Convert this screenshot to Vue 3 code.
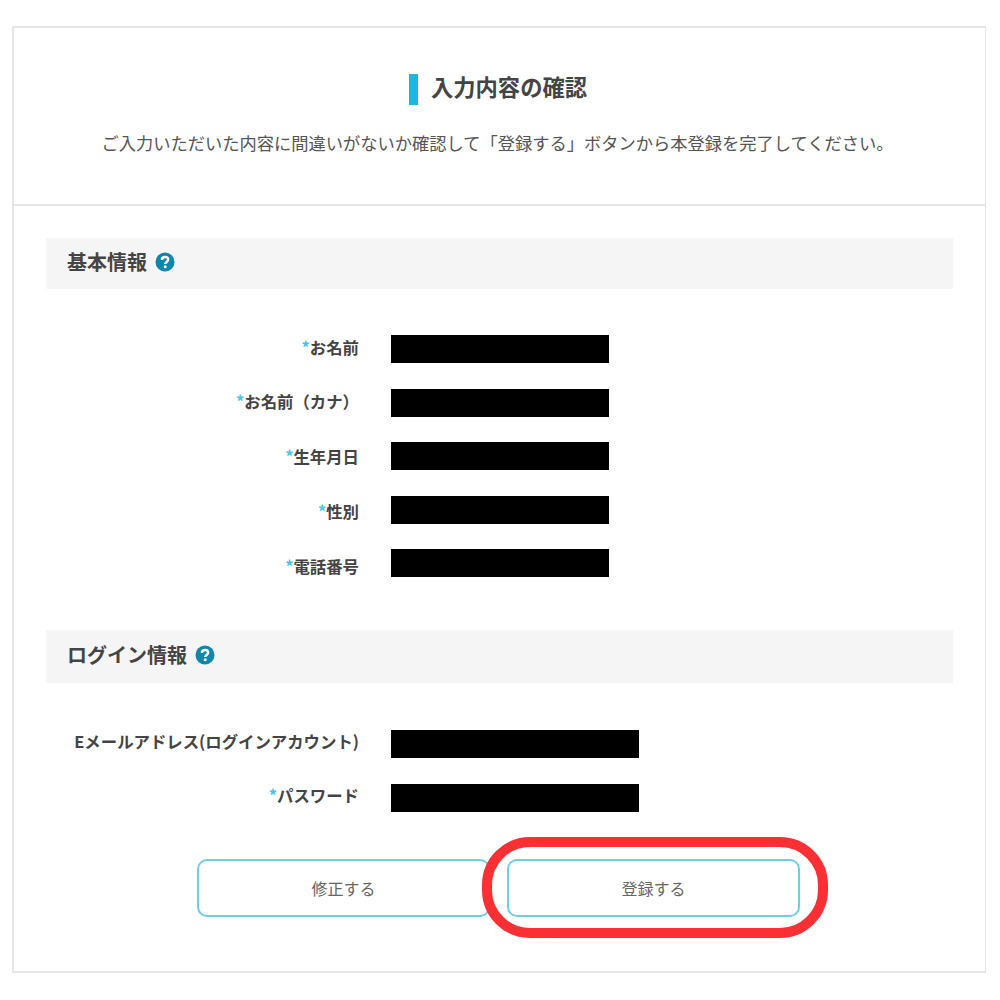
<script setup>
const basic = [
  { label: 'お名前', req: true },
  { label: 'お名前（カナ）', req: true },
  { label: '生年月日', req: true },
  { label: '性別', req: true },
  { label: '電話番号', req: true },
]
const login = [
  { label: 'Eメールアドレス(ログインアカウント)', req: false },
  { label: 'パスワード', req: true },
]
</script>

<template>
  <div class="page">
    <main class="card">
      <header class="head">
        <h1 class="title"><span class="tick"></span><span class="title-text">入力内容の確認</span></h1>
        <p class="lead">ご入力いただいた内容に間違いがないか確認して「登録する」ボタンから本登録を完了してください。</p>
      </header>
      <div class="body">
        <section>
          <h2 class="bar">基本情報
            <svg class="help" viewBox="0 0 20 20" width="20" height="20"><circle cx="10" cy="10" r="9.5" fill="#0f86ab"/><path d="M6.9 8c0-1.9 1.4-3 3.2-3s3.1 1 3.1 2.6c0 2.3-3 2.3-3 4.4" fill="none" stroke="#fff" stroke-width="2.4"/><circle cx="10.2" cy="14.8" r="1.5" fill="#fff"/></svg>
          </h2>
          <div class="rows">
            <div class="labels">
              <div class="label" v-for="r in basic" :key="r.label"><span v-if="r.req" class="req">*</span>{{ r.label }}</div>
            </div>
            <div class="masks">
              <div class="mask" v-for="r in basic" :key="r.label"></div>
            </div>
          </div>
        </section>
        <section class="second">
          <h2 class="bar">ログイン情報
            <svg class="help" viewBox="0 0 20 20" width="20" height="20"><circle cx="10" cy="10" r="9.5" fill="#0f86ab"/><path d="M6.9 8c0-1.9 1.4-3 3.2-3s3.1 1 3.1 2.6c0 2.3-3 2.3-3 4.4" fill="none" stroke="#fff" stroke-width="2.4"/><circle cx="10.2" cy="14.8" r="1.5" fill="#fff"/></svg>
          </h2>
          <div class="rows login">
            <div class="labels">
              <div class="label" v-for="r in login" :key="r.label"><span v-if="r.req" class="req">*</span>{{ r.label }}</div>
            </div>
            <div class="masks">
              <div class="mask wide" v-for="r in login" :key="r.label"></div>
            </div>
          </div>
        </section>
        <div class="actions">
          <button class="btn" type="button">修正する</button>
          <div class="focus">
            <button class="btn" type="button">登録する</button>
            <span class="ring"></span>
          </div>
        </div>
      </div>
    </main>
  </div>
</template>

<style>
html, body { margin: 0; background: #fff; }
</style>

<style scoped>
.page {
  height: 1000px;
  box-sizing: border-box;
  padding: 26px 13px 27px 12px;
  font-family: "Noto Sans CJK JP", "Noto Sans", sans-serif;
  color: #444;
}
.card {
  width: 974px;
  height: 947px;
  box-sizing: border-box;
  border: 2px solid #e6e6e6;
  border-right-width: 1px;
}
.head {
  height: 178px;
  box-sizing: border-box;
  border-bottom: 2px solid #e6e6e6;
  padding-top: 45px;
  text-align: center;
}
.title {
  display: flex;
  justify-content: center;
  align-items: center;
  margin: 0;
  padding-right: 3px;
  height: 32px;
  font-size: 22.3px;
  font-weight: 700;
  color: #444;
  line-height: 32px;
}
.title-text { margin-bottom: 7px; }
.tick {
  width: 9px;
  height: 31px;
  margin-right: 13px;
  background: #1fb5e0;
}
.lead {
  margin: 26px 0 0;
  padding-right: 4px;
  font-size: 17.25px;
  line-height: 24px;
  color: #555;
}
.body {
  padding: 32px 32px 0 32px;
}
.bar {
  display: flex;
  align-items: center;
  gap: 8px;
  height: 51px;
  box-sizing: border-box;
  margin: 0;
  padding: 0 0 4px 21px;
  background: #f5f5f5;
  font-size: 20px;
  font-weight: 700;
  color: #444;
}
.second { margin-top: 53px; }
.second .bar { height: 53px; }
.rows {
  display: flex;
  gap: 32px;
  margin-top: 46px;
}
.rows.login { margin-top: 47px; }
.labels {
  width: 313px;
  margin-top: -2.5px;
  margin-bottom: -6px;
  display: flex;
  flex-direction: column;
  gap: 26.75px;
}
.login .labels { gap: 26px; margin-top: -3.5px; }
.label {
  height: 28px;
  line-height: 28px;
  text-align: right;
  font-size: 16.4px;
  font-weight: 700;
  color: #444;
  white-space: nowrap;
}
.req { color: #4cc3e6; font-weight: 700; }
.masks {
  display: flex;
  flex-direction: column;
  gap: 25.6px;
}
.login .masks { gap: 26px; }
.mask {
  width: 218px;
  height: 28px;
  background: #000;
}
.mask.wide { width: 248px; }
.actions {
  display: flex;
  gap: 17px;
  margin: 47px 0 0 151px;
}
.btn {
  width: 293px;
  height: 58px;
  box-sizing: border-box;
  border: 2px solid #6fcee6;
  border-radius: 10px;
  background: #fff;
  font-family: inherit;
  font-size: 16px;
  color: #666;
  padding: 0;
}
.focus { position: relative; }
.ring {
  position: absolute;
  left: -25px;
  top: -22px;
  width: 346px;
  height: 101px;
  box-sizing: border-box;
  border: 10px solid #fb3035;
  border-radius: 48px;
  pointer-events: none;
}
</style>
